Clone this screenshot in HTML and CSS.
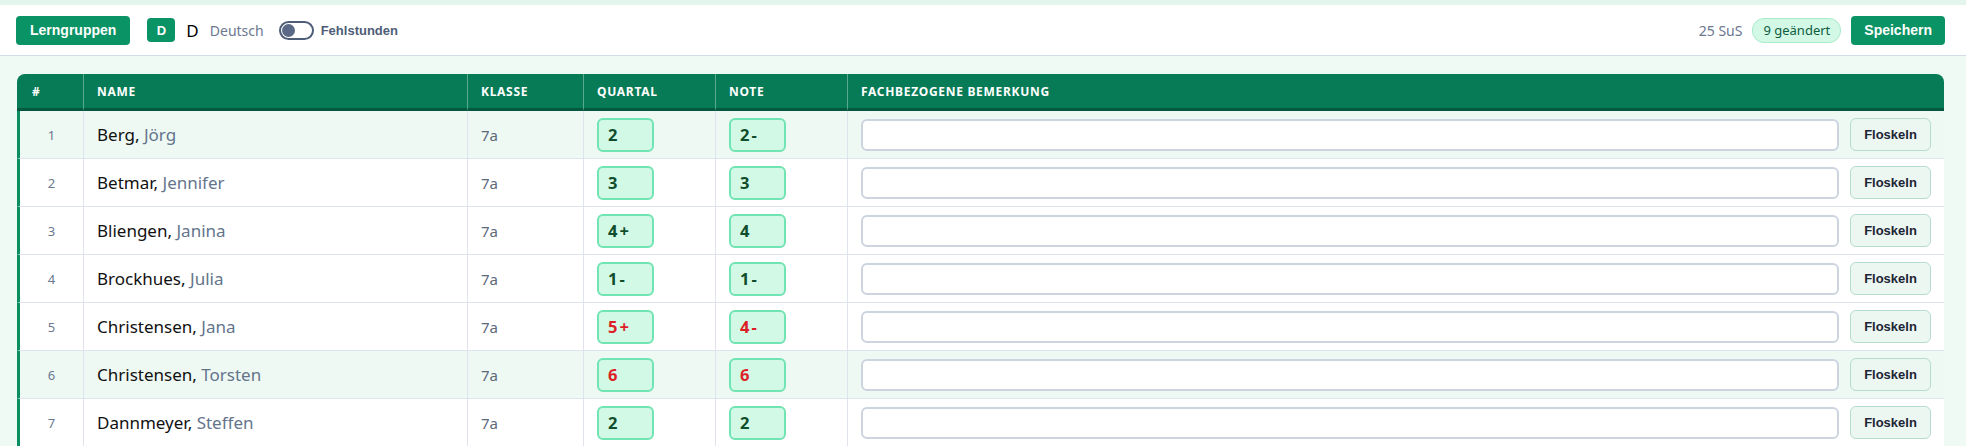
FILE: index.html
```html
<!DOCTYPE html>
<html lang="de">
<head>
  <meta charset="utf-8">
  <title>Leistungsdaten</title>
  <link rel="stylesheet" href="styles.css">
</head>
<body>
  <div class="toolbar">
    <div class="toolbar__left">
      <button class="btn btn--green">Lerngruppen</button>
      <span class="fach__badge">D</span>
      <span class="fach__kuerzel">D</span>
      <span class="fach__name">Deutsch</span>
      <label class="toggle">
        <span class="toggle__track"><span class="toggle__knob"></span></span>
        <span class="toggle__label">Fehlstunden</span>
      </label>
    </div>
    <div class="toolbar__right">
      <span class="count">25 SuS</span>
      <span class="changed">9 geändert</span>
      <button class="btn btn--green">Speichern</button>
    </div>
  </div>

  <div class="content">
    <table class="grades">
      <colgroup>
        <col class="col-nr">
        <col class="col-name">
        <col class="col-klasse">
        <col class="col-note">
        <col class="col-note">
        <col>
      </colgroup>
      <thead>
        <tr>
          <th>#</th>
          <th>Name</th>
          <th>Klasse</th>
          <th>Quartal</th>
          <th>Note</th>
          <th>Fachbezogene Bemerkung</th>
        </tr>
      </thead>
      <tbody>
        <tr class="active">
          <td class="nr">1</td>
          <td class="name">Berg, <span class="vorname">Jörg</span></td>
          <td class="klasse">7a</td>
          <td><input class="grade" value="2"></td>
          <td><input class="grade" value="2-"></td>
          <td><div class="remark"><input class="remark__input"><button class="floskeln">Floskeln</button></div></td>
        </tr>
        <tr>
          <td class="nr">2</td>
          <td class="name">Betmar, <span class="vorname">Jennifer</span></td>
          <td class="klasse">7a</td>
          <td><input class="grade" value="3"></td>
          <td><input class="grade" value="3"></td>
          <td><div class="remark"><input class="remark__input"><button class="floskeln">Floskeln</button></div></td>
        </tr>
        <tr>
          <td class="nr">3</td>
          <td class="name">Bliengen, <span class="vorname">Janina</span></td>
          <td class="klasse">7a</td>
          <td><input class="grade" value="4+"></td>
          <td><input class="grade" value="4"></td>
          <td><div class="remark"><input class="remark__input"><button class="floskeln">Floskeln</button></div></td>
        </tr>
        <tr>
          <td class="nr">4</td>
          <td class="name">Brockhues, <span class="vorname">Julia</span></td>
          <td class="klasse">7a</td>
          <td><input class="grade" value="1-"></td>
          <td><input class="grade" value="1-"></td>
          <td><div class="remark"><input class="remark__input"><button class="floskeln">Floskeln</button></div></td>
        </tr>
        <tr>
          <td class="nr">5</td>
          <td class="name">Christensen, <span class="vorname">Jana</span></td>
          <td class="klasse">7a</td>
          <td><input class="grade grade--bad" value="5+"></td>
          <td><input class="grade grade--bad" value="4-"></td>
          <td><div class="remark"><input class="remark__input"><button class="floskeln">Floskeln</button></div></td>
        </tr>
        <tr class="active">
          <td class="nr">6</td>
          <td class="name">Christensen, <span class="vorname">Torsten</span></td>
          <td class="klasse">7a</td>
          <td><input class="grade grade--bad" value="6"></td>
          <td><input class="grade grade--bad" value="6"></td>
          <td><div class="remark"><input class="remark__input"><button class="floskeln">Floskeln</button></div></td>
        </tr>
        <tr>
          <td class="nr">7</td>
          <td class="name">Dannmeyer, <span class="vorname">Steffen</span></td>
          <td class="klasse">7a</td>
          <td><input class="grade" value="2"></td>
          <td><input class="grade" value="2"></td>
          <td><div class="remark"><input class="remark__input"><button class="floskeln">Floskeln</button></div></td>
        </tr>
      </tbody>
    </table>
  </div>
</body>
</html>
```

FILE: styles.css
```css
html, body {
  overflow: hidden;
}
body {
  margin: 0;
  background: #effaf5;
  font-family: "Noto Sans", "Open Sans", sans-serif;
  color: #111827;
  border-top: 5px solid #e3f5ed;
}

.toolbar {
  height: 50px;
  background: #fff;
  border-bottom: 1px solid #d3dbe8;
  display: flex;
  align-items: center;
  justify-content: space-between;
  padding: 0 21px 0 16px;
}
.toolbar__left, .toolbar__right {
  display: flex;
  align-items: center;
}

.btn {
  border: 0;
  border-radius: 4px;
  height: 29px;
  padding: 0 14px;
  font-family: "Liberation Sans", Arial, sans-serif;
  font-weight: bold;
  font-size: 14px;
  cursor: pointer;
}
.btn--green {
  background: #0a9364;
  color: #fff;
}

.fach__badge {
  margin-left: 17px;
  width: 28px;
  height: 24px;
  border-radius: 4px;
  background: #0a9364;
  color: #fff;
  font-family: "Liberation Sans", Arial, sans-serif;
  font-weight: bold;
  font-size: 13px;
  display: flex;
  align-items: center;
  justify-content: center;
}
.fach__kuerzel {
  margin-left: 11px;
  font-size: 17px;
  color: #000;
}
.fach__name {
  margin-left: 11px;
  font-size: 14px;
  color: #6b7890;
}

.toggle {
  margin-left: 15px;
  display: flex;
  align-items: center;
  gap: 7px;
}
.toggle__track {
  width: 29px;
  height: 15px;
  border: 2px solid #4e5d78;
  border-radius: 10px;
  display: flex;
  align-items: center;
  padding: 0 1px;
}
.toggle__knob {
  width: 13px;
  height: 13px;
  border-radius: 50%;
  background: #5a6a86;
}
.toggle__label {
  font-family: "Liberation Sans", Arial, sans-serif;
  font-weight: bold;
  font-size: 13px;
  color: #4e5d78;
}

.count {
  font-size: 14px;
  color: #6b7890;
}
.changed {
  margin-left: 10px;
  height: 23px;
  padding: 0 10px;
  border-radius: 12px;
  background: #d3f8e6;
  border: 1px solid #a6ecc9;
  color: #0d5c3d;
  font-size: 13px;
  display: flex;
  align-items: center;
}
.toolbar__right .btn {
  margin-left: 10px;
  padding: 0 13px;
}

.content {
  padding: 18px 22px 0 17px;
}

.grades {
  width: 100%;
  border-collapse: separate;
  border-spacing: 0;
  table-layout: fixed;
}
.col-nr { width: 66px; }
.col-name { width: 384px; }
.col-klasse { width: 116px; }
.col-note { width: 132px; }

.grades th {
  background: #067b56;
  color: #fff;
  height: 34px;
  padding: 0 13px;
  text-align: left;
  font-size: 12px;
  font-weight: bold;
  letter-spacing: 0.7px;
  text-transform: uppercase;
  border-bottom: 3px solid #04583d;
  border-left: 1px solid #5ba88c;
}
.grades th:first-child {
  border-left: 0;
  border-top-left-radius: 8px;
  padding-left: 15px;
}
.grades th:last-child {
  border-top-right-radius: 8px;
}

.grades td {
  height: 47px;
  padding: 0 13px;
  background: #fff;
  border-bottom: 1px solid #dee3ec;
  border-left: 1px solid #dee3ec;
}
.grades td:first-child {
  border-left: 3px solid #0b8f60;
}
.grades tr.active td {
  background: #eef9f3;
}

.nr {
  text-align: center;
  font-size: 13px;
  color: #6b7890;
}
.name {
  font-size: 17px;
  color: #111;
}
.vorname {
  color: #64748b;
}
.klasse {
  font-size: 15px;
  color: #5d6878;
}

.grade {
  width: 57px;
  height: 34px;
  box-sizing: border-box;
  border: 2px solid #71e4b4;
  border-radius: 6px;
  background: #d2f9e5;
  padding: 0 9px;
  font-family: "Noto Sans", sans-serif;
  font-weight: bold;
  font-size: 16.5px;
  letter-spacing: 2px;
  color: #0f4d2c;
  outline: none;
}
.grade--bad {
  color: #dc1f26;
}

.remark {
  display: flex;
  align-items: center;
  gap: 11px;
}
.remark__input {
  flex: 1;
  min-width: 0;
  height: 32px;
  box-sizing: border-box;
  border: 2px solid #ccd4e0;
  border-radius: 6px;
  background: #fff;
}
.floskeln {
  width: 81px;
  height: 33px;
  border: 1px solid #b6dccd;
  border-radius: 6px;
  background: #ecf7f2;
  font-family: "Liberation Sans", Arial, sans-serif;
  font-weight: bold;
  font-size: 13px;
  color: #1d2433;
  cursor: pointer;
}
```
